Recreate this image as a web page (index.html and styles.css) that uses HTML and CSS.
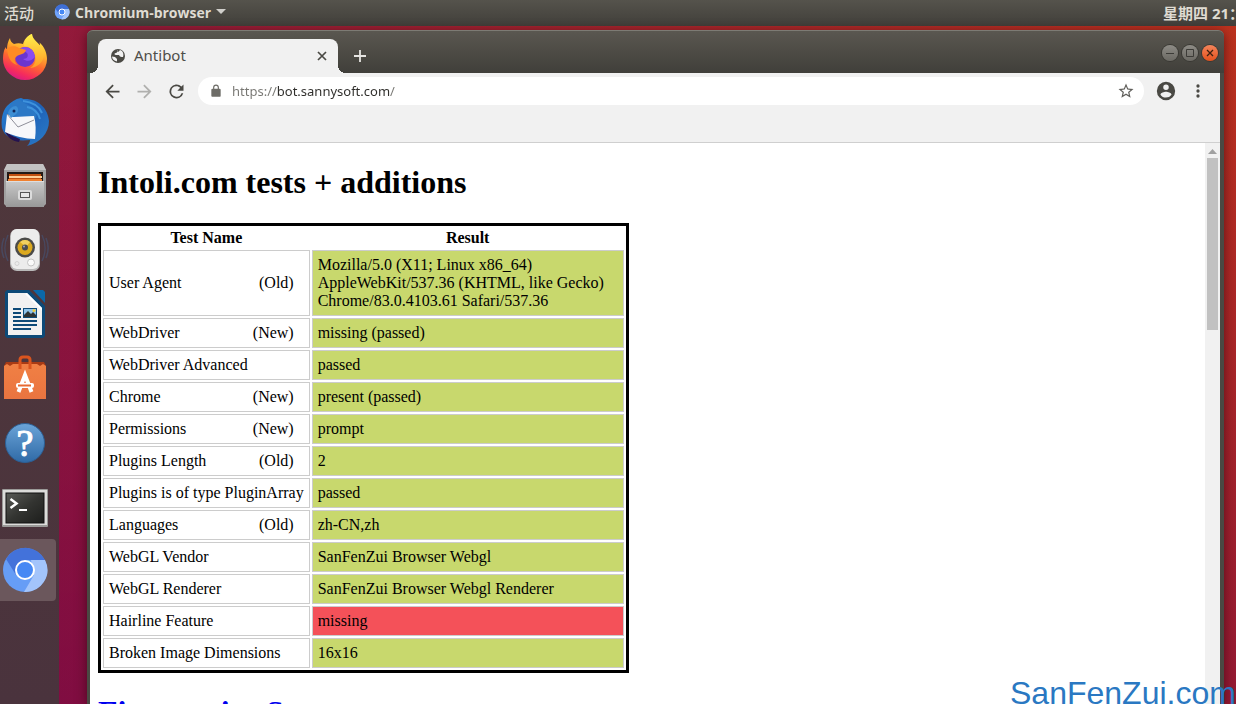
FILE: index.html
```html
<!DOCTYPE html>
<html lang="zh-CN">
  <head>
    <meta charset="UTF-8" />
    <meta name="viewport" content="width=device-width, initial-scale=1.0" />
    <title>Antibot</title>
    <link rel="stylesheet" href="styles.css">
  </head>
  <body>
    <header class="topbar">
      <button class="topbar-item">活动</button>
      <button class="topbar-item app-menu">
        <svg width="16" height="16" viewBox="0 0 48 48">
          <circle cx="24" cy="24" r="22" fill="#6fa3fb"/>
          <path d="M4 14A22 22 0 0 1 45 15H24L15 29z" fill="#3e6fd6"/>
          <path d="M45 15A22 22 0 0 1 22 46L33 29 30 15z" fill="#a3c4fb"/>
          <circle cx="24" cy="24" r="9" fill="#4688f4" stroke="#fff" stroke-width="3"/>
        </svg>
        <span>Chromium-browser</span>
        <svg width="10" height="6" viewBox="0 0 10 6"><path d="M0 0h10L5 5z" fill="#d0cfcb"/></svg>
      </button>
      <div class="clock">星期四 21：05</div>
    </header>

    <div class="desktop">
      <nav class="dock">
        <button class="dock-item" aria-label="Firefox">
          <svg viewBox="0 0 48 48">
            <defs>
              <linearGradient id="fox" x1="0.75" y1="0" x2="0.35" y2="1">
                <stop offset="0" stop-color="#fff14a"/>
                <stop offset="0.35" stop-color="#ffb52e"/>
                <stop offset="0.6" stop-color="#ff6a2e"/>
                <stop offset="0.85" stop-color="#f52c5c"/>
                <stop offset="1" stop-color="#d81b83"/>
              </linearGradient>
              <linearGradient id="flame" x1="0" y1="0" x2="0" y2="1">
                <stop offset="0" stop-color="#fff04c"/>
                <stop offset="1" stop-color="#ff9a24"/>
              </linearGradient>
            </defs>
            <path d="M9 4C9 7 11 9 13 10c3-1 6-1 9 0 1-4 4-8 9-10 0 5 4 8 8 12 0-2 0-3-1-4 6 5 8 12 8 17A22 21 0 0 1 2 25C2 20 3 15 5 13c0 1 0 2 1 2 0-4 1-8 3-11z" fill="url(#fox)"/>
            <circle cx="24" cy="23" r="10" fill="#6b35cf"/>
            <path d="M24 13a10 10 0 0 1 10 10c-3 4-8 5-12 2 4 0 6-3 4-6-2-2-5-3-7-4 1-1 3-2 5-2z" fill="#8b4cf0"/>
            <path d="M31 0c-5 2-8 6-8 12 6 0 10 4 11 9 2 6-1 11-5 13 9-1 14-7 14-14 0-9-12-13-12-20z" fill="url(#flame)"/>
            <path d="M6 15c3-3 8-4 12-1 2 1 5 1 7 2-1 4-5 4-9 6-4 3-2 7 1 9-6-1-10-6-11-16z" fill="#ff8b24"/>
          </svg>
        </button>
        <button class="dock-item" aria-label="Thunderbird">
          <svg viewBox="0 0 48 48">
            <defs>
              <linearGradient id="bird" x1="0" y1="0" x2="1" y2="1">
                <stop offset="0" stop-color="#2a86d8"/>
                <stop offset="0.5" stop-color="#1f62b8"/>
                <stop offset="1" stop-color="#2b7cc8"/>
              </linearGradient>
            </defs>
            <path d="M6 8c4-4 8-7 14-8 2 1 3 1 4 1 13 0 23 9 24 22 0 12-9 22-22 25 2-2 3-4 3-6C14 44 4 40 1 30 0 22 1 14 6 8z" fill="url(#bird)"/>
            <path d="M4 33c3 3 10 6 15 8l-1 3C11 43 6 39 4 33z" fill="#25124f"/>
            <path d="M8 17C6 9 12 3 18 1c3 4 10 5 15 10 3 3 3 6 2 9z" fill="#2c78c6"/>
            <path d="M22 3c9 1 16 5 19 12M26 9c7 1 11 5 13 12" fill="none" stroke="#3f92dc" stroke-width="2"/>
            <path d="M6 16l6 3 21-1c2 7 2 15 1 23-10 0-21-3-30-7z" fill="#f7f7fa"/>
            <path d="M6 16l11 13 16-7" fill="none" stroke="#8f8f9a"/>
            <path d="M7 15c1-4 4-7 8-7 3 2 3 6-1 9l-4 3z" fill="#3d8ed4"/>
            <circle cx="13" cy="13" r="1.500" fill="#10265c"/>
          </svg>
        </button>
        <button class="dock-item" aria-label="Files">
          <svg viewBox="0 0 48 48">
            <defs>
              <linearGradient id="steel" x1="0" y1="0" x2="0" y2="1">
                <stop offset="0" stop-color="#c9c9c9"/>
                <stop offset="1" stop-color="#989898"/>
              </linearGradient>
            </defs>
            <path d="M6 2h36l3 6v34l-2 2H5l-2-2V8z" fill="#a0a0a0"/>
            <path d="M6 2h36l3 6H3z" fill="#c2c2c2"/>
            <rect x="6" y="10" width="36" height="10" fill="#231a16"/>
            <path d="M8 12h32v8H8z" fill="#c2500f"/>
            <path d="M8 14h33v2H8z" fill="#ffcf96"/>
            <path d="M7 17h34v3H7z" fill="#f08130"/>
            <path d="M5 19h38v26H5z" fill="url(#steel)"/>
            <path d="M5 19.500h38" stroke="#dedede"/>
            <rect x="17" y="28" width="14" height="10" rx="2" fill="#dcdcdc"/>
            <rect x="19.500" y="30.500" width="9" height="5" fill="#e6e6e6" stroke="#555"/>
          </svg>
        </button>
        <button class="dock-item" aria-label="Rhythmbox">
          <svg viewBox="0 0 48 48">
            <path d="M7 9c-4 8-4 18 0 26M3 12c-3 7-3 13 0 20M41 9c4 8 4 18 0 26M45 12c3 7 3 13 0 20" fill="none" stroke="#48485f" stroke-width="1.500"/>
            <rect x="9" y="3" width="30" height="42" rx="7" fill="#b9b9b9"/>
            <rect x="10" y="3" width="28" height="40" rx="6" fill="#ececec"/>
            <circle cx="24" cy="21.500" r="10" fill="#4b4b49"/>
            <circle cx="24" cy="21.500" r="7.500" fill="#dba91f"/>
            <path d="M19 16a7.500 7.500 0 0 1 10 0l-4 5z" fill="#f2d060"/>
            <circle cx="24" cy="21.500" r="3" fill="#4a4d50"/>
            <circle cx="23" cy="20.500" r="1" fill="#aab"/>
            <circle cx="30" cy="36.500" r="3.500" fill="#fafafa" stroke="#c4c4c4"/>
            <circle cx="16" cy="37.500" r="2" fill="none" stroke="#d2d2d2"/>
          </svg>
        </button>
        <button class="dock-item" aria-label="LibreOffice Writer">
          <svg viewBox="0 0 48 48">
            <path d="M6 0h22l16 16v30l-2 2H6l-2-2V2z" fill="#0d4a78"/>
            <path d="M32 0h10l2 2v11z" fill="#0b68a8"/>
            <path d="M7 3h19l15 15v27H7z" fill="#f1f1f1"/>
            <path d="M26 3l15 15v3L24 4z" fill="#fff"/>
            <path d="M12 19h8M12 23h8M12 27h8M12 31h24M12 35h24M12 39h18" stroke="#0d4a78" stroke-width="2"/>
            <rect x="22" y="18" width="14" height="10" fill="#0d4a78"/>
            <rect x="23" y="19" width="12" height="8" fill="#8dc3ea"/>
            <path d="M23 27v-2l4-4 3 3 2-2 3 3v2z" fill="#2d3334"/>
            <circle cx="33" cy="20.500" r="1.500" fill="#f0cb3c"/>
          </svg>
        </button>
        <button class="dock-item" aria-label="Ubuntu Software">
          <svg viewBox="0 0 48 48">
            <defs>
              <linearGradient id="bag" x1="0" y1="0" x2="0" y2="1">
                <stop offset="0" stop-color="#f08044"/>
                <stop offset="1" stop-color="#ea7440"/>
              </linearGradient>
            </defs>
            <path d="M5 8h38l2 4H3z" fill="#a83a14"/>
            <path d="M3 12l3-2 3 2 3-2 24 0 3 2 3-2 3 2v33H3z" fill="url(#bag)"/>
            <path d="M19 15V6q0-3 3-3h4q3 0 3 3v9" fill="none" stroke="#d9541e" stroke-width="3"/>
            <path d="M17.500 38l6.500-17 6.500 17" fill="none" stroke="#fff" stroke-width="4"/>
            <rect x="15" y="29" width="18" height="5" rx="2" fill="#fff"/>
            <path d="M17 31.500h13" stroke="#e96a32" stroke-width="2"/>
          </svg>
        </button>
        <button class="dock-item" aria-label="Help">
          <svg viewBox="0 0 48 48">
            <defs>
              <linearGradient id="help" x1="0" y1="0" x2="0" y2="1">
                <stop offset="0" stop-color="#6ba4d8"/>
                <stop offset="1" stop-color="#2f6aa6"/>
              </linearGradient>
            </defs>
            <circle cx="24" cy="25" r="19.500" fill="url(#help)" stroke="#2c5f94"/>
            <text x="24" y="38" class="help-mark" text-anchor="middle">?</text>
          </svg>
        </button>
        <button class="dock-item" aria-label="Terminal">
          <svg viewBox="0 0 48 48">
            <defs>
              <linearGradient id="term" x1="0" y1="0" x2="1" y2="1">
                <stop offset="0" stop-color="#5a5b57"/>
                <stop offset="0.5" stop-color="#333431"/>
                <stop offset="1" stop-color="#1d1e1c"/>
              </linearGradient>
            </defs>
            <rect x="1" y="7" width="46" height="38" rx="1" fill="#9a9a98"/>
            <rect x="2" y="8" width="44" height="35" fill="#dcdcda"/>
            <rect x="5" y="11" width="38" height="30" fill="url(#term)" stroke="#111"/>
            <path d="M9.500 17l6 4.500-6 4.500" fill="none" stroke="#fff" stroke-width="2.500"/>
            <path d="M18 28h8" stroke="#fff" stroke-width="2"/>
          </svg>
        </button>
        <button class="dock-item active" aria-label="Chromium">
          <svg viewBox="0 0 48 48">
            <circle cx="24" cy="24" r="22" fill="#669df6"/>
            <path d="M5 13A22 22 0 0 1 44 14H24L15 29z" fill="#4372da"/>
            <path d="M44 14A22 22 0 0 1 23 46L33 29 30 14z" fill="#a3c4fb"/>
            <circle cx="24" cy="24" r="9" fill="#4688f4" stroke="#fff" stroke-width="2"/>
          </svg>
        </button>
      </nav>

      <main class="workspace">
        <section class="window">
          <div class="titlebar">
            <div class="tab">
              <svg width="16" height="16" viewBox="0 0 16 16">
                <circle cx="8" cy="8" r="7" fill="#4a4944"/>
                <path d="M2 8.500L5 9l2 2v2.500C4 13 2 11 2 8.500zM8 2c-2 1 0 2-2 3-2 0-2 2 0 2h3c1 2 2 2 4 2 1-3 0-6-3-7-1 1-1 2-3 2z" fill="#f1f1f1"/>
              </svg>
              <span class="tab-title">Antibot</span>
              <button class="tab-close" aria-label="Close tab">
                <svg width="16" height="16" viewBox="0 0 16 16"><path d="M4 4l8 8M12 4l-8 8" stroke="#4a4944" stroke-width="1.700"/></svg>
              </button>
            </div>
            <button class="new-tab" aria-label="New tab">
              <svg width="14" height="14" viewBox="0 0 14 14"><path d="M7 1v12M1 7h12" stroke="#e6e5e2" stroke-width="1.800"/></svg>
            </button>
            <div class="controls">
              <button class="control" aria-label="Minimize">
                <svg width="16" height="16" viewBox="0 0 16 16"><path d="M4 8.500h8" stroke="#3c3b37"/></svg>
              </button>
              <button class="control" aria-label="Maximize">
                <svg width="16" height="16" viewBox="0 0 16 16"><path d="M4.500 4.500h7v7h-7z" fill="none" stroke="#3c3b37"/></svg>
              </button>
              <button class="control close" aria-label="Close">
                <svg width="16" height="16" viewBox="0 0 16 16"><path d="M5 5l6 6M11 5l-6 6" stroke="#3c2010" stroke-width="1.300"/></svg>
              </button>
            </div>
          </div>

          <div class="window-body">
            <div class="toolbar">
              <button class="tool" aria-label="Back">
                <svg width="21" height="21" viewBox="0 0 24 24"><path d="M20 11H7.830l5.590-5.590L12 4l-8 8 8 8 1.410-1.410L7.830 13H20z"/></svg>
              </button>
              <button class="tool disabled" aria-label="Forward">
                <svg width="21" height="21" viewBox="0 0 24 24"><path d="M12 4l-1.410 1.410L16.170 11H4v2h12.170l-5.580 5.590L12 20l8-8z"/></svg>
              </button>
              <button class="tool" aria-label="Reload">
                <svg width="21" height="21" viewBox="0 0 24 24"><path d="M17.650 6.350A8 8 0 1 0 19.730 14h-2.080A6 6 0 1 1 12 6c1.660 0 3.140.69 4.220 1.780L13 11h7V4z"/></svg>
              </button>
              <div class="omnibox">
                <svg width="14" height="14" viewBox="0 0 24 24" fill="#6d6c67"><path d="M18 8h-1V6A5 5 0 0 0 7 6v2H6a2 2 0 0 0-2 2v10c0 1 1 2 2 2h12a2 2 0 0 0 2-2V10a2 2 0 0 0-2-2zM9 6a3 3 0 0 1 6 0v2H9z"/></svg>
                <input class="url" type="text" aria-label="Address" value="https://bot.sannysoft.com/" />
                <button class="star" aria-label="Bookmark">
                  <svg width="18" height="18" viewBox="0 0 24 24" fill="#5f5e5a"><path d="M22 9.240l-7.190-.62L12 2 9.190 8.630 2 9.240l5.460 4.730L5.820 21 12 17.270 18.180 21l-1.630-7.030zM12 15.400l-3.760 2.270 1-4.280-3.320-2.880 4.380-.38L12 6.100l1.710 4.040 4.380.38-3.320 2.880 1 4.280z"/></svg>
                </button>
              </div>
              <button class="tool" aria-label="Profile">
                <svg width="22" height="22" viewBox="0 0 24 24"><path d="M12 2a10 10 0 1 0 0 20 10 10 0 0 0 0-20zm0 3a3 3 0 1 1 0 6 3 3 0 0 1 0-6zm0 14.200a7.200 7.200 0 0 1-6-3.220c.03-1.990 4-3.080 6-3.080s5.970 1.090 6 3.080a7.200 7.200 0 0 1-6 3.220z"/></svg>
              </button>
              <button class="tool" aria-label="Menu">
                <svg width="20" height="20" viewBox="0 0 24 24"><circle cx="12" cy="6" r="2"/><circle cx="12" cy="12" r="2"/><circle cx="12" cy="18" r="2"/></svg>
              </button>
            </div>

            <div class="viewport">
              <article class="page">
                <h1>Intoli.com tests + additions</h1>
                <table class="results">
                  <tr><th>Test Name</th><th>Result</th></tr>
                  <tr>
                    <td>User Agent <span class="age">(Old)</span></td>
                    <td class="result passed">Mozilla/5.0 (X11; Linux x86_64) AppleWebKit/537.36 (KHTML, like Gecko) Chrome/83.0.4103.61 Safari/537.36</td>
                  </tr>
                  <tr><td>WebDriver <span class="age">(New)</span></td><td class="result passed">missing (passed)</td></tr>
                  <tr><td>WebDriver Advanced</td><td class="result passed">passed</td></tr>
                  <tr><td>Chrome <span class="age">(New)</span></td><td class="result passed">present (passed)</td></tr>
                  <tr><td>Permissions <span class="age">(New)</span></td><td class="result passed">prompt</td></tr>
                  <tr><td>Plugins Length <span class="age">(Old)</span></td><td class="result passed">2</td></tr>
                  <tr><td>Plugins is of type PluginArray</td><td class="result passed">passed</td></tr>
                  <tr><td>Languages <span class="age">(Old)</span></td><td class="result passed">zh-CN,zh</td></tr>
                  <tr><td>WebGL Vendor</td><td class="result passed">SanFenZui Browser Webgl</td></tr>
                  <tr><td>WebGL Renderer</td><td class="result passed">SanFenZui Browser Webgl Renderer</td></tr>
                  <tr><td>Hairline Feature</td><td class="result failed">missing</td></tr>
                  <tr><td>Broken Image Dimensions</td><td class="result passed">16x16</td></tr>
                </table>
                <h1><a href="#">Fingerprint Scanner tests</a></h1>
              </article>
              <div class="scrollbar">
                <svg width="9" height="5" viewBox="0 0 9 5"><path d="M4.500 0L9 5H0z" fill="#a0a0a0"/></svg>
                <div class="thumb"></div>
              </div>
            </div>
          </div>
        </section>
      </main>
    </div>

    <div class="watermark">SanFenZui.com</div>
  </body>
</html>
```
FILE: styles.css
```css
* {
  box-sizing: border-box;
}

body {
  margin: 0;
  height: 100vh;
  display: flex;
  flex-direction: column;
  overflow: hidden;
  position: relative;
  font-family: "Noto Sans", "Noto Sans CJK SC", sans-serif;
}

button {
  display: flex;
  align-items: center;
  justify-content: center;
  padding: 0;
  border: none;
  background: none;
  font: inherit;
  color: inherit;
  cursor: pointer;
}

svg {
  flex: none;
}

/* top panel */
.topbar {
  flex: none;
  height: 26px;
  display: flex;
  align-items: center;
  gap: 20px;
  padding: 0 0 2px 4px;
  background: linear-gradient(#55534c, #413f3a);
  color: #dfdbd2;
  font-family: "Open Sans", "Noto Sans CJK SC", sans-serif;
  font-size: 15px;
  font-weight: bold;
  white-space: nowrap;
}

.topbar-item {
  font-weight: 500;
}

.app-menu {
  gap: 5px;
  font-size: 14px;
  font-weight: bold;
}

.clock {
  flex: 0 0 73px;
  margin-left: auto;
  overflow: hidden;
}

/* desktop and dock */
.desktop {
  flex: 1;
  min-height: 0;
  display: flex;
  background:
    linear-gradient(rgba(110, 0, 72, 0), rgba(110, 0, 72, 0.5)),
    linear-gradient(to right, #90183c, #bc321e);
}

.dock {
  flex: 0 0 59px;
  display: flex;
  flex-direction: column;
  gap: 2px;
  padding-top: 1px;
  background: linear-gradient(#50383b, #4a333d);
}

.dock-item {
  flex: none;
  width: 56px;
  height: 62px;
  justify-content: flex-start;
  padding-left: 1px;
  border-radius: 0 4px 4px 0;
}

.dock-item svg {
  width: 48px;
  height: 48px;
}

.dock-item.active {
  background: #6b575c;
}

.help-mark {
  font-family: "Liberation Serif", serif;
  font-size: 38px;
  fill: #fff;
  stroke: #fff;
}

/* browser window */
.workspace {
  flex: 1;
  min-width: 0;
  display: flex;
  padding: 4px 12px 0 28px;
}

.window {
  flex: 1;
  min-width: 0;
  display: flex;
  flex-direction: column;
  border-radius: 6px 6px 0 0;
  background: #4a4943;
  box-shadow: 0 2px 12px rgba(40, 0, 10, 0.6);
}

.titlebar {
  flex: none;
  height: 43px;
  display: flex;
  align-items: flex-end;
  padding: 0 6px 0 11px;
  border-top: 1px solid #7d7b74;
  border-radius: 6px 6px 0 0;
  background: linear-gradient(#5a5750, #403f3a);
}

.tab {
  position: relative;
  width: 240px;
  height: 34px;
  display: flex;
  align-items: center;
  gap: 8px;
  padding: 0 8px 0 12px;
  border-radius: 8px 8px 0 0;
  background: #f1f1f1;
  color: #4f4e49;
  font-size: 15px;
}

/* curved feet of the tab */
.tab::before,
.tab::after {
  content: "";
  position: absolute;
  bottom: 0;
  width: 8px;
  height: 8px;
}

.tab::before {
  left: -8px;
  background: radial-gradient(circle at 0 0, transparent 8px, #f1f1f1 8px);
}

.tab::after {
  right: -8px;
  background: radial-gradient(circle at 100% 0, transparent 8px, #f1f1f1 8px);
}

.tab-title {
  flex: 1;
  line-height: 20px;
  padding-bottom: 2px;
}

.new-tab {
  width: 28px;
  height: 34px;
  margin-left: 8px;
}

.controls {
  align-self: center;
  display: flex;
  gap: 4px;
  margin-left: auto;
  padding-top: 2px;
}

.control {
  width: 16px;
  height: 16px;
  border-radius: 50%;
  background: linear-gradient(#8d8b85, #6b6963);
  box-shadow: 0 0 0 1px #3a3934;
}

.control.close {
  background: linear-gradient(#f4845a, #e3511d);
}

.window-body {
  flex: 1;
  min-height: 0;
  display: flex;
  flex-direction: column;
  border: solid #4a4943;
  border-width: 0 4px 0 3px;
  background: #fff;
}

.toolbar {
  flex: none;
  height: 70px;
  display: flex;
  align-items: flex-start;
  gap: 4px;
  padding: 4px 8px 0;
  border-bottom: 1px solid #cfcfcf;
  background: #f1f1f1;
}

.tool {
  width: 28px;
  height: 28px;
  fill: #4a4944;
}

.tool.disabled {
  fill: #b0b0ae;
}

.omnibox {
  flex: 1;
  height: 28px;
  display: flex;
  align-items: center;
  gap: 9px;
  margin: 0 4px;
  padding: 0 9px 0 11px;
  border-radius: 14px;
  background: #fff;
}

.url {
  flex: 1;
  min-width: 0;
  padding: 0 0 1px;
  border: none;
  outline: none;
  font-family: "Noto Sans", sans-serif;
  font-size: 13px;
  color: transparent;
  /* scheme and trailing slash are lighter than the host */
  background: linear-gradient(to right, #777672 45px, #2e2d2a 45px, #2e2d2a 158px, #777672 158px);
  background-clip: text;
  -webkit-background-clip: text;
}

.star {
  width: 18px;
  height: 18px;
}

.viewport {
  flex: 1;
  min-height: 0;
  display: flex;
}

.scrollbar {
  flex: 0 0 15px;
  display: flex;
  flex-direction: column;
  align-items: center;
  gap: 4px;
  padding-top: 6px;
  background: #f1f1f1;
}

.thumb {
  width: 11px;
  height: 172px;
  background: #c1c1c1;
}

/* test page */
.page {
  flex: 1;
  min-width: 0;
  overflow: hidden;
  padding: 0 8px;
  color: #000;
  font-family: "Liberation Serif", serif;
  font-size: 16px;
  line-height: 18px;
}

.page h1 {
  margin: 21px 0 22px;
  font-size: 32px;
  line-height: 37px;
}

.page a {
  color: #0000ee;
}

.results {
  border: 3px solid #000;
  border-spacing: 2px;
}

.results th {
  padding: 1px;
}

.results td {
  padding: 5px;
  border: 1px solid #ccc;
}

.results .result {
  width: 312px;
}

.age {
  float: right;
  margin-right: 10px;
}

.passed {
  background: #c8d86d;
}

.failed {
  background: #f45159;
}

.watermark {
  position: absolute;
  left: calc(100% - 226px);
  bottom: -7px;
  color: #2a78c2;
  font-family: "Liberation Sans", sans-serif;
  font-size: 32px;
  line-height: 36px;
  white-space: nowrap;
}
```
